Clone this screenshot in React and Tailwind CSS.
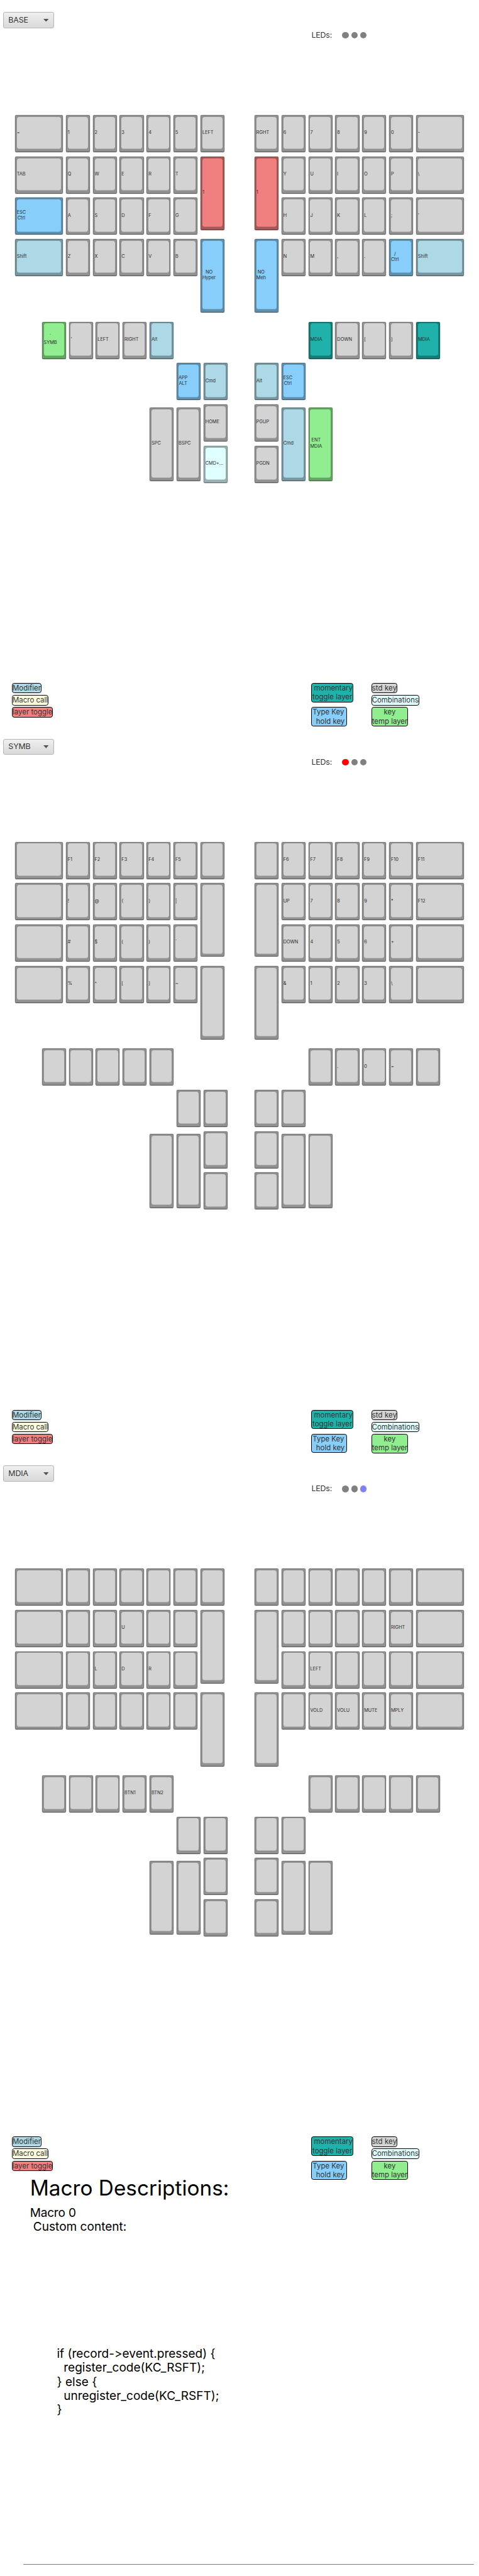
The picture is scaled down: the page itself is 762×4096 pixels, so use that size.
import React from "react";

const TONES = {
  std: "bg-[#d3d3d3]",
  hold: "bg-[#87cefa]",
  mod: "bg-[#add8e6]",
  toggle: "bg-[#f08080]",
  temp: "bg-[#90ee90]",
  momentary: "bg-[#20b2aa]",
  combo: "bg-[#e0ffff]",
  macro: "bg-[#ffffe0]",
};

// A key is either a plain label or a [label, tone] pair.
function Key({ k, wide, tall }) {
  const [label, tone] = Array.isArray(k) ? k : [k, "std"];
  return (
    <div
      className={`${wide ? "w-20" : "w-10"} ${tall ? "h-[123px]" : "h-[62px]"} ${TONES[tone]} shrink-0 rounded-[2px] shadow-[0_0_0_0.6px_rgba(0,0,0,0.2)]`}
    >
      <div className="h-full rounded-[2px] border border-b-[1.5px] border-black/20 border-b-black/40 bg-black/31 bg-clip-border px-[2px] pt-[2px] pb-[4px]">
        <div
          className={`${TONES[tone]} flex h-full items-center overflow-hidden rounded-[4px] border-b border-black/15 text-center text-[7.7px] leading-[10px] whitespace-pre text-[#2b2b2b]`}
        >
          <span>{label}</span>
        </div>
      </div>
    </div>
  );
}

function Row({ keys, wideAt }) {
  return (
    <div className="flex gap-[5px]">
      {keys.map((k, i) => (
        <Key key={i} k={k} wide={i === wideAt} />
      ))}
    </div>
  );
}

function InnerColumn({ keys }) {
  return (
    <div className="flex flex-col">
      <Key k={keys[0]} />
      <div className="mt-[7px]">
        <Key k={keys[1]} tall />
      </div>
      <div className="mt-[15px]">
        <Key k={keys[2]} tall />
      </div>
    </div>
  );
}

function Stack({ keys }) {
  return (
    <div className="flex flex-col gap-[7px]">
      {keys.map((k, i) => (
        <Key key={i} k={k} />
      ))}
    </div>
  );
}

function Half({ side, data }) {
  const left = side === "left";
  const main = (
    <div className="flex flex-col gap-[7px]">
      {data.rows.map((r, i) => (
        <Row key={i} keys={r} wideAt={left ? 0 : 5} />
      ))}
    </div>
  );
  const inner = <InnerColumn keys={data.inner} />;
  const [a, b, c] = data.tall;
  return (
    <div className="w-[400px] pl-[25px]">
      <div className="flex h-[345px] gap-[5px]">
        {left ? main : inner}
        {left ? inner : main}
      </div>
      <div className={left ? "pl-[45px]" : "pl-[90px]"}>
        <Row keys={data.thumb} />
      </div>
      {left ? (
        <div className="mt-[7px] flex gap-[5px] pl-[225px]">
          <div className="pt-[74px]">
            <Key k={a} tall />
          </div>
          <div className="flex flex-col gap-3">
            <Key k={b} />
            <Key k={c} tall />
          </div>
          <Stack keys={data.stack} />
        </div>
      ) : (
        <div className="mt-[7px] flex gap-[5px]">
          <Stack keys={data.stack} />
          <div className="flex flex-col gap-3">
            <Key k={b} />
            <Key k={c} tall />
          </div>
          <div className="pt-[74px]">
            <Key k={a} tall />
          </div>
        </div>
      )}
    </div>
  );
}

function Chip({ tone, children, className = "" }) {
  return (
    <div
      className={`${TONES[tone]} ${className} w-fit rounded-[4px] border border-black text-center text-xs leading-[15px] whitespace-pre text-[#333]`}
    >
      {children}
    </div>
  );
}

function Legend() {
  return (
    <div className="flex h-[73px] pl-5">
      <div className="flex w-[500px] flex-col gap-[3px]">
        <Chip tone="mod">Modifier</Chip>
        <Chip tone="macro">Macro call</Chip>
        <Chip tone="toggle">layer toggle</Chip>
      </div>
      <div className="flex w-[100px] flex-col gap-2">
        <Chip tone="momentary">{" momentary\ntoggle layer"}</Chip>
        <Chip tone="hold">{"Type Key \n  hold key "}</Chip>
      </div>
      <div className="flex flex-col gap-[3px]">
        <Chip tone="std" className="tracking-[0.01em]">std key</Chip>
        <Chip tone="combo">Combinations</Chip>
        <Chip tone="temp">{"key\ntemp layer"}</Chip>
      </div>
    </div>
  );
}

function Layer({ name, leds, left, right }) {
  return (
    <section className="flex h-[1213px] flex-col">
      <div className="flex h-[192px] items-start pt-5 pl-[5px]">
        <div className="flex h-[27px] w-[85px] items-center justify-between rounded-[3px] border border-[#b4b4b4] bg-linear-to-b from-[#efefef] to-[#d9d9d9] pr-2 pl-2 text-[13px] text-[#333]">
          <span className="tracking-[-0.01em]">{name}</span>
          <svg viewBox="0 0 9 5" className="h-[5px] w-[9px]" fill="#555">
            <path d="M0 0H9L4.5 5Z" />
          </svg>
        </div>
        <div className="mt-[29px] ml-[430px] flex h-5 items-center text-[13px] text-[#333]">
          <span className="w-[51.5px] tracking-[-0.01em]">LEDs:</span>
          <div className="flex gap-1">
            {leds.map((c, i) => (
              <span key={i} className={`${c} size-[11px] rounded-full`} />
            ))}
          </div>
        </div>
      </div>
      <div className="flex h-[948px]">
        <Half side="left" data={left} />
        <Half side="right" data={right} />
      </div>
      <Legend />
    </section>
  );
}

const blank = (n) => Array(n).fill("");
const GRAY = "bg-[#808080]";

const LAYERS = [
  {
    name: "BASE",
    leds: [GRAY, GRAY, GRAY],
    left: {
      rows: [
        ["=", "1", "2", "3", "4", "5"],
        ["TAB", "Q", "W", "E", "R", "T"],
        [["ESC\nCtrl", "hold"], "A", "S", "D", "F", "G"],
        [["Shift", "mod"], "Z", "X", "C", "V", "B"],
      ],
      inner: ["LEFT", ["1", "toggle"], ["NO\nHyper", "hold"]],
      thumb: [["`\nSYMB", "temp"], "'", "LEFT", "RIGHT", ["Alt", "mod"]],
      tall: ["SPC", ["APP\nALT", "hold"], "BSPC"],
      stack: [["Cmd", "mod"], "HOME", ["CMD+...", "combo"]],
    },
    right: {
      rows: [
        ["6", "7", "8", "9", "0", "-"],
        ["Y", "U", "I", "O", "P", "\\"],
        ["H", "J", "K", "L", ";", "'"],
        ["N", "M", ",", ".", ["/\nCtrl", "hold"], ["Shift", "mod"]],
      ],
      inner: ["RGHT", ["1", "toggle"], ["NO\nMeh", "hold"]],
      thumb: [["MDIA", "momentary"], "DOWN", "[", "]", ["MDIA", "momentary"]],
      tall: [["ENT\nMDIA", "temp"], ["ESC\nCtrl", "hold"], ["Cmd", "mod"]],
      stack: [["Alt", "mod"], "PGUP", "PGDN"],
    },
  },
  {
    name: "SYMB",
    leds: ["bg-[#ff0000]", GRAY, GRAY],
    left: {
      rows: [
        ["", "F1", "F2", "F3", "F4", "F5"],
        ["", "!", "@", "{", "}", "|"],
        ["", "#", "$", "(", ")", "`"],
        ["", "%", "^", "[", "]", "~"],
      ],
      inner: blank(3),
      thumb: blank(5),
      tall: blank(3),
      stack: blank(3),
    },
    right: {
      rows: [
        ["F6", "F7", "F8", "F9", "F10", "F11"],
        ["UP", "7", "8", "9", "*", "F12"],
        ["DOWN", "4", "5", "6", "+", ""],
        ["&", "1", "2", "3", "\\", ""],
      ],
      inner: blank(3),
      thumb: ["", ".", "0", "=", ""],
      tall: blank(3),
      stack: blank(3),
    },
  },
  {
    name: "MDIA",
    leds: [GRAY, GRAY, "bg-[#8080ff]"],
    left: {
      rows: [
        blank(6),
        ["", "", "", "U", "", ""],
        ["", "", "L", "D", "R", ""],
        blank(6),
      ],
      inner: blank(3),
      thumb: ["", "", "", "BTN1", "BTN2"],
      tall: blank(3),
      stack: blank(3),
    },
    right: {
      rows: [
        blank(6),
        ["", "", "", "", "RIGHT", ""],
        ["", "LEFT", "", "", "", ""],
        ["", "VOLD", "VOLU", "MUTE", "MPLY", ""],
      ],
      inner: blank(3),
      thumb: blank(5),
      tall: blank(3),
      stack: blank(3),
    },
  },
];

export default function App() {
  return (
    <div className="h-[4096px] w-full overflow-hidden bg-white">
      <main className="w-[800px] font-['Inter','Liberation_Sans',sans-serif] [font-feature-settings:'calt'_0] [zoom:0.9527]">
        {LAYERS.map((l) => (
          <Layer key={l.name} {...l} />
        ))}
        <div className="flex flex-col pl-[50px] text-[20px] leading-[23.5px] text-black">
          <h1 className="mt-[-8px] h-[51px] text-[35px] leading-[43px] whitespace-nowrap">Macro Descriptions:</h1>
          <p className="tracking-[-0.01em]">Macro 0</p>
          <p className="pl-[5.5px]">Custom content:</p>
          <pre className="mt-[188px] h-[362px] pl-[45px] font-['Inter','Liberation_Sans',sans-serif] [font-feature-settings:'calt'_0]">
            {"if (record->event.pressed) {\n  register_code(KC_RSFT);\n} else {\n  unregister_code(KC_RSFT);\n}"}
          </pre>
        </div>
        <div className="ml-[39px] h-[2px] w-[752px] bg-[#808080]" />
      </main>
    </div>
  );
}
